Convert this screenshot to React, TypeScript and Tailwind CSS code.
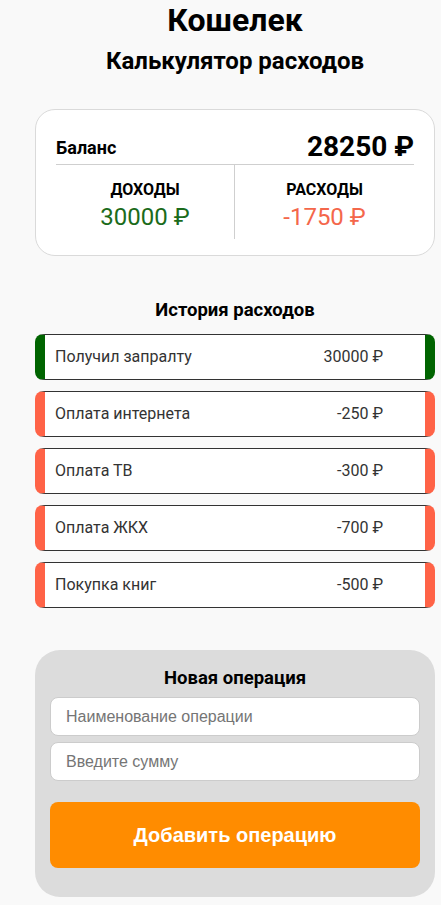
const history = [
  { name: 'Получил запралту', amount: 30000 },
  { name: 'Оплата интернета', amount: -250 },
  { name: 'Оплата ТВ', amount: -300 },
  { name: 'Оплата ЖКХ', amount: -700 },
  { name: 'Покупка книг', amount: -500 },
];

export default function App() {
  return (
    <div className="min-h-[905px] bg-[#f9f9f9] font-['Roboto',sans-serif] text-black">
      <div className="ml-[35px] w-[400px] pb-2">
        {/* Header */}
        <h1 className="pt-[1px] text-center text-[32px] font-bold leading-[38px]">Кошелек</h1>
        <h2 className="mt-[7px] text-center text-[24px] font-bold leading-[30px]">Калькулятор расходов</h2>

        {/* Balance */}
        <div className="mt-[33px] rounded-[20px] border border-[#dadada] bg-white px-[20px] pt-[20px] pb-[16px]">
          <div className="flex h-[34px] items-center justify-between">
            <span className="text-[18px] font-bold">Баланс</span>
            <span className="text-[28px] font-bold">28250 ₽</span>
          </div>
          <div className="grid grid-cols-2 border-t border-[#cfcfcf]">
            <div className="flex flex-col items-center border-r border-[#cfcfcf] pt-[14px] pb-[6px]">
              <span className="text-[16px] font-bold leading-[22px]">ДОХОДЫ</span>
              <span className="text-[24px] leading-[32px] text-[#1b6b1b]">30000 ₽</span>
            </div>
            <div className="flex flex-col items-center pt-[14px] pb-[6px]">
              <span className="text-[16px] font-bold leading-[22px]">РАСХОДЫ</span>
              <span className="text-[24px] leading-[32px] text-[#f4674b]">-1750 ₽</span>
            </div>
          </div>
        </div>

        {/* History */}
        <h3 className="mt-[42px] text-center text-[18.5px] font-bold leading-[24px]">История расходов</h3>
        <ul className="mt-[12px] flex flex-col gap-[11px]">
          {history.map((item) => (
            <li
              key={item.name}
              className={`flex h-[46px] items-center justify-between rounded-[8px] border border-x-[10px] border-y-[#333] bg-white pl-[10px] pr-[42px] text-[16px] text-[#333] ${
                item.amount > 0 ? 'border-x-[#006400]' : 'border-x-[#ff6347]'
              }`}
            >
              <span>{item.name}</span>
              <span>{item.amount} ₽</span>
            </li>
          ))}
        </ul>

        {/* New operation */}
        <div className="mt-[42px] rounded-[25px] bg-[#dcdcdc] px-[15px] pt-[16px] pb-[29px]">
          <h3 className="text-center text-[18.5px] font-bold leading-[24px]">Новая операция</h3>
          <div className="mt-[7px] flex flex-col gap-[6px]">
            <input
              placeholder="Наименование операции"
              className="h-[39px] w-full rounded-[8px] border border-[#ccc] bg-white px-[15px] font-['Liberation_Sans',Arial,sans-serif] text-[16px] placeholder:text-[#757575]"
            />
            <input
              placeholder="Введите сумму"
              className="h-[39px] w-full rounded-[8px] border border-[#ccc] bg-white px-[15px] font-['Liberation_Sans',Arial,sans-serif] text-[16px] placeholder:text-[#757575]"
            />
          </div>
          <button className="mt-[21px] h-[66px] w-full rounded-[8px] bg-[#ff8c00] font-['Liberation_Sans',Arial,sans-serif] text-[20px] font-bold text-white">
            Добавить операцию
          </button>
        </div>
      </div>
    </div>
  );
}
